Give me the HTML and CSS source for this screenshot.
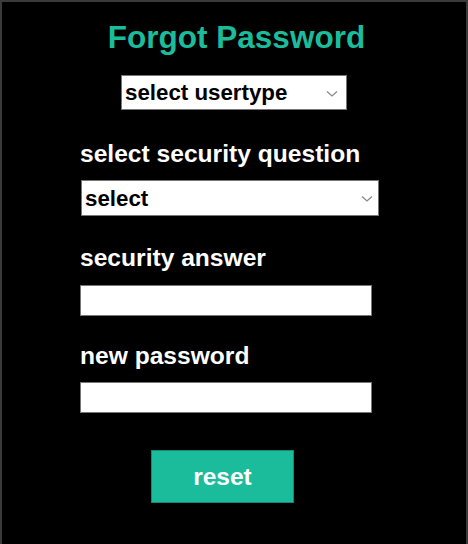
FILE: index.html
```html
<!DOCTYPE html>
<html>
<head>
<meta charset="utf-8">
<link rel="stylesheet" href="styles.css">
</head>
<body>
<div class="frame">
  <h1 class="title">Forgot Password</h1>
  <div class="center-row">
    <div class="select-wrap usertype">
      <select class="select"><option>select usertype</option></select>
      <svg class="chev" width="12" height="8" viewBox="0 0 12 8"><path d="M1 1.5 L6 6 L11 1.5" fill="none" stroke="#8a8a8a" stroke-width="1.3"/></svg>
    </div>
  </div>
  <form class="form">
    <label class="label l1">select security question</label>
    <div class="select-wrap question">
      <select class="select"><option>select</option></select>
      <svg class="chev" width="12" height="8" viewBox="0 0 12 8"><path d="M1 1.5 L6 6 L11 1.5" fill="none" stroke="#8a8a8a" stroke-width="1.3"/></svg>
    </div>
    <label class="label l2">security answer</label>
    <input class="field" type="text">
    <label class="label l3">new password</label>
    <input class="field" type="password">
    <button class="reset" type="button">reset</button>
  </form>
</div>
</body>
</html>
```
FILE: styles.css
```css
html, body {
  margin: 0;
  padding: 0;
  background: #000;
}
.frame {
  box-sizing: border-box;
  width: 468px;
  height: 544px;
  border: 2px solid #3a3a3a;
  border-bottom: none;
  background: #000;
  padding-top: 17px;
  font-family: "Liberation Sans", Arial, sans-serif;
  font-weight: bold;
  display: flex;
  flex-direction: column;
}
.title {
  margin: 0;
  font-size: 31.5px;
  line-height: 36px;
  color: #1abc9c;
  text-align: center;
  padding-left: 5px;
}
.center-row {
  display: flex;
  justify-content: center;
  margin-top: 20px;
}
.select-wrap {
  position: relative;
  display: block;
}
.select {
  -webkit-appearance: none;
  appearance: none;
  box-sizing: border-box;
  display: block;
  margin: 0;
  background: #fff;
  border: 1px solid #767676;
  border-radius: 0;
  color: #000;
  font-family: "Liberation Sans", Arial, sans-serif;
  font-weight: bold;
  font-size: 22.3px;
  padding: 0 0 0 3px;
  outline: none;
}
.usertype .select {
  width: 226px;
  height: 35px;
}
.question {
  margin-left: 1px;
}
.question .select {
  width: 298px;
  height: 36px;
}
.chev {
  position: absolute;
  top: 50%;
  margin-top: -3px;
  pointer-events: none;
}
.usertype .chev {
  right: 9px;
}
.question .chev {
  right: 6px;
}
.form {
  display: flex;
  flex-direction: column;
  align-items: flex-start;
  padding-left: 78px;
  margin: 0;
}
.label {
  display: block;
  color: #fff;
  font-size: 24.6px;
  line-height: 28px;
}
.l1 { margin-top: 30px; margin-bottom: 12px; }
.l2 { margin-top: 28px; margin-bottom: 13px; }
.l3 { margin-top: 26px; margin-bottom: 12px; }
.field {
  box-sizing: border-box;
  display: block;
  width: 292px;
  height: 31px;
  margin: 0;
  border: 1px solid #767676;
  background: #fff;
  padding: 0 4px;
  outline: none;
}
.reset {
  box-sizing: border-box;
  margin: 37px 0 0 71px;
  width: 143px;
  height: 53px;
  background: #1abc9c;
  border: 1px solid #138a72;
  color: #fff;
  font-family: "Liberation Sans", Arial, sans-serif;
  font-weight: bold;
  font-size: 24.5px;
  padding: 0;
  cursor: pointer;
}
```
